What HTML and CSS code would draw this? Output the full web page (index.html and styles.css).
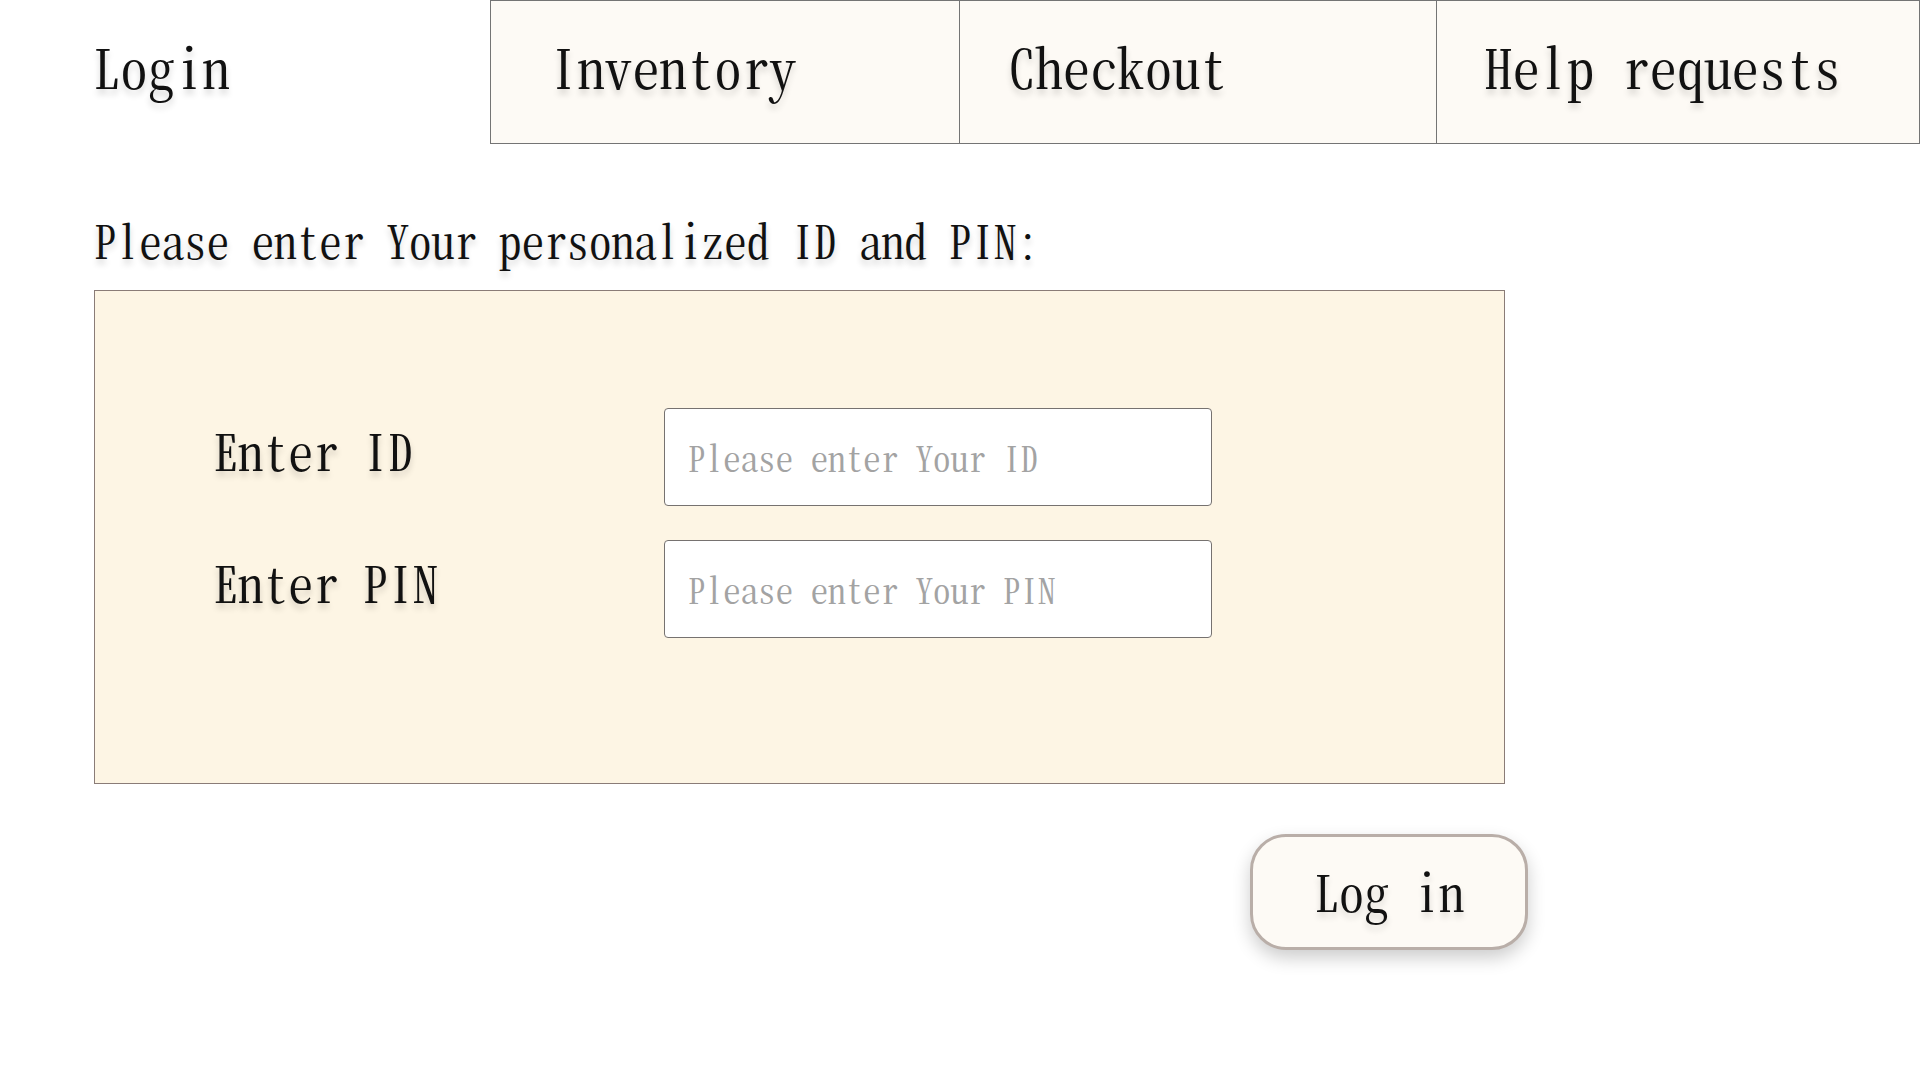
FILE: index.html
```html
<!DOCTYPE html>
<html lang="en">
<head>
<meta charset="utf-8">
<title>Login</title>
<link rel="stylesheet" href="styles.css">
</head>
<body>
<nav class="tabs">
  <a class="tab tab-active">Login</a>
  <a class="tab tab-inventory">Inventory</a>
  <a class="tab">Checkout</a>
  <a class="tab">Help requests</a>
</nav>
<main class="content">
  <p class="prompt">Please enter Your personalized ID and PIN:</p>
  <form class="login-box">
    <label class="field-label" for="uid">Enter ID</label>
    <input class="field-input" id="uid" type="text" placeholder="Please enter Your ID">
    <label class="field-label" for="pin">Enter PIN</label>
    <input class="field-input" id="pin" type="password" placeholder="Please enter Your PIN">
  </form>
  <div class="actions">
    <button class="login-button" type="button">Log in</button>
  </div>
</main>
</body>
</html>
```
FILE: styles.css
```css
html, body {
  margin: 0;
  padding: 0;
  background: #ffffff;
}

body {
  font-family: "Noto Serif CJK JP", "Noto Serif CJK SC", "Noto Sans CJK SC", "Liberation Mono", monospace;
  font-feature-settings: "hwid" 1;
  color: #111111;
}

.tabs {
  display: grid;
  grid-template-columns: 490px 470px 477px 1fr;
  height: 144px;
}

.tab {
  display: flex;
  align-items: center;
  padding-left: 48px;
  padding-bottom: 14px;
  font-size: 54px;
  letter-spacing: 0.4px;
  text-shadow: 0 5px 6px rgba(0, 0, 0, 0.16);
  background: #fdfaf5;
  border: 1px solid #747474;
  border-left: none;
  color: #111111;
}

.tab-active {
  background: #ffffff;
  border: none;
  padding-left: 93px;
  padding-bottom: 14px;
}

.tab-inventory {
  border-left: 1px solid #747474;
  padding-left: 59px;
}

.content {
  padding-left: 94px;
  padding-bottom: 60px;
}

.prompt {
  margin: 0;
  padding-top: 64px;
  height: 82px;
  font-size: 45px;
  line-height: 64px;
  text-shadow: 0 5px 6px rgba(0, 0, 0, 0.16);
}

.login-box {
  box-sizing: border-box;
  width: 1411px;
  height: 494px;
  margin: 0;
  padding: 117px 0 0 118px;
  background: #fdf5e4;
  border: 1px solid #8a7c77;
  display: grid;
  grid-template-columns: 451px 548px;
  grid-auto-rows: 98px;
  row-gap: 34px;
  align-items: center;
}

.field-label {
  font-size: 50px;
  text-shadow: 0 5px 6px rgba(0, 0, 0, 0.16);
  margin-top: -16px;
}

.field-input {
  box-sizing: border-box;
  width: 548px;
  height: 98px;
  border: 1px solid #767270;
  border-radius: 4px;
  background: #ffffff;
  padding: 0 0 0 23px;
  font-family: inherit;
  font-feature-settings: "hwid" 1;
  font-size: 35px;
  color: #111111;
  outline: none;
}

.field-input::placeholder {
  color: #a3a3a3;
}

.actions {
  width: 1434px;
  display: flex;
  justify-content: flex-end;
  padding-top: 50px;
}

.login-button {
  box-sizing: border-box;
  width: 278px;
  height: 116px;
  border: 3px solid #b9aea8;
  border-radius: 36px;
  background: #fdfaf5;
  box-shadow: 0 8px 18px rgba(0, 0, 0, 0.2);
  font-family: inherit;
  font-feature-settings: "hwid" 1;
  font-size: 50px;
  color: #111111;
  text-shadow: 0 5px 6px rgba(0, 0, 0, 0.14);
  padding: 0 0 4px 0;
}
```
